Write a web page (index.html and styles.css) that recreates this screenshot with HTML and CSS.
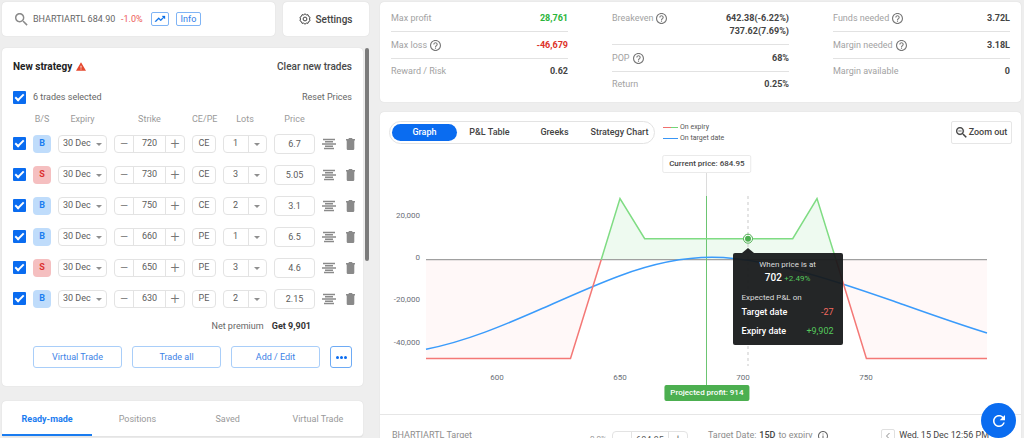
FILE: index.html
```
<!DOCTYPE html>
<html lang="en">
<head>
<meta charset="utf-8">
<meta name="viewport" content="width=device-width, initial-scale=1">
<title>Strategy builder</title>
<link rel="stylesheet" href="styles.css">
</head>
<body>
<svg class="sprite" aria-hidden="true">
  <symbol id="i-search" viewBox="3 3 18 18"><path d="M15.5 14h-.79l-.28-.27C15.41 12.59 16 11.11 16 9.5 16 5.91 13.09 3 9.5 3S3 5.91 3 9.5 5.91 16 9.5 16c1.61 0 3.09-.59 4.23-1.57l.27.28v.79l5 4.99L20.49 19l-4.99-5zm-6 0C7.01 14 5 11.99 5 9.5S7.01 5 9.5 5 14 7.01 14 9.5 11.99 14 9.5 14z"/></symbol>
  <symbol id="i-zoomout" viewBox="3 3 18 18"><path d="M15.5 14h-.79l-.28-.27C15.41 12.59 16 11.11 16 9.5 16 5.91 13.09 3 9.5 3S3 5.91 3 9.5 5.91 16 9.5 16c1.61 0 3.09-.59 4.23-1.57l.27.28v.79l5 4.99L20.49 19l-4.99-5zm-6 0C7.01 14 5 11.99 5 9.5S7.01 5 9.5 5 14 7.01 14 9.5 11.99 14 9.5 14zM7 9h5v1H7z" stroke="currentColor" stroke-width=".3"/></symbol>
  <symbol id="i-trend" viewBox="0 4 24 16"><path d="M16 6l2.29 2.29-4.88 4.88-4-4L2 16.59 3.41 18l6-6 4 4 6.3-6.29L22 12V6z" stroke="currentColor" stroke-width=".6"/></symbol>
  <symbol id="i-gear" viewBox="0 0 24 24"><g fill="none" stroke="currentColor" stroke-width="2" stroke-linejoin="round"><path d="M12 1.5l2.600 2.300 3.400-.4 1.100 3.300 3 1.800L21 12l1.100 3.500-3 1.800-1.100 3.300-3.400-.4L12 22.500l-2.600-2.300-3.400.4-1.100-3.300-3-1.800L3 12 1.900 8.500l3-1.800L6 3.400l3.400.4z"/><circle cx="12" cy="12" r="3.800"/></g></symbol>
  <symbol id="i-warn" viewBox="1 2 22 19"><path d="M1 21h22L12 2 1 21zm12-3h-2v-2h2v2zm0-4h-2v-4h2v4z"/></symbol>
  <symbol id="i-help" viewBox="2 2 20 20"><path d="M11 18h2v-2h-2v2zm1-16C6.480 2 2 6.480 2 12s4.480 10 10 10 10-4.480 10-10S17.520 2 12 2zm0 18c-4.410 0-8-3.590-8-8s3.590-8 8-8 8 3.590 8 8-3.590 8-8 8zm0-14c-2.210 0-4 1.790-4 4h2c0-1.100.9-2 2-2s2 .9 2 2c0 2-3 1.750-3 5h2c0-2.250 3-2.500 3-5 0-2.210-1.790-4-4-4z"/></symbol>
  <symbol id="i-info" viewBox="2 2 20 20"><path d="M11 17h2v-6h-2v6zm1-15C6.480 2 2 6.480 2 12s4.480 10 10 10 10-4.480 10-10S17.520 2 12 2zm0 18c-4.410 0-8-3.590-8-8s3.590-8 8-8 8 3.590 8 8-3.590 8-8 8zM11 9h2V7h-2v2z"/></symbol>
  <symbol id="i-depth" viewBox="0 0 14 12"><path d="M1 1.500h12M3 3.750h8M0 6h14M3 8.250h8M2 10.500h10" fill="none" stroke="currentColor" stroke-width="1.300"/></symbol>
  <symbol id="i-trash" viewBox="0 0 9 12"><path d="M3 0h3l.6 1H9v1.500H0V1h2.400zM.7 2.500h7.600v8.300q0 1.200-1.200 1.200H1.900Q.7 12 .7 10.800z"/></symbol>
  <symbol id="i-refresh" viewBox="4 4 16 16"><path d="M17.650 6.350C16.200 4.900 14.210 4 12 4c-4.420 0-7.990 3.580-7.990 8s3.570 8 7.990 8c3.730 0 6.840-2.550 7.730-6h-2.080c-.82 2.330-3.040 4-5.650 4-3.310 0-6-2.690-6-6s2.690-6 6-6c1.660 0 3.140.69 4.220 1.780L13 11h7V4l-2.350 2.350z"/></symbol>
</svg>

<div class="shell">
  <aside class="side">
    <div class="topbar">
      <div class="card search">
        <svg class="icon search-icon"><use href="#i-search"/></svg>
        <input class="search-input" type="text" value="BHARTIARTL 684.90" aria-label="Search instrument">
        <span class="change">-1.0%</span>
        <button class="chip chip-icon" aria-label="Open chart"><svg class="icon"><use href="#i-trend"/></svg></button>
        <button class="chip">Info</button>
      </div>
      <button class="card settings"><svg class="icon"><use href="#i-gear"/></svg>Settings</button>
    </div>

    <div class="scroller">
      <div class="scroll-content">
        <section class="card strategy">
          <header class="strategy-head">
            <h2>New strategy <svg class="icon warn"><use href="#i-warn"/></svg></h2>
            <button class="link-btn">Clear new trades</button>
          </header>
          <div class="selection">
            <label class="selection-label"><input class="check" type="checkbox" checked>6 trades selected</label>
            <button class="link-btn small">Reset Prices</button>
          </div>
          <table class="trades">
            <colgroup><col class="c-check"><col class="c-side"><col class="c-expiry"><col class="c-strike"><col class="c-type"><col class="c-lots"><col class="c-price"><col class="c-depth"><col class="c-del"></colgroup>
            <thead>
              <tr><th></th><th>B/S</th><th>Expiry</th><th>Strike</th><th>CE/PE</th><th>Lots</th><th>Price</th><th></th><th></th></tr>
            </thead>
            <tbody id="trade-rows"></tbody>
          </table>
          <p class="premium">Net premium <strong>Get 9,901</strong></p>
          <div class="actions">
            <button class="action">Virtual Trade</button>
            <button class="action">Trade all</button>
            <button class="action">Add / Edit</button>
            <button class="more" aria-label="More"><i></i><i></i><i></i></button>
          </div>
        </section>

        <nav class="card tabs">
          <button class="tab active">Ready-made</button>
          <button class="tab">Positions</button>
          <button class="tab">Saved</button>
          <button class="tab">Virtual Trade</button>
        </nav>
      </div>
      <div class="scroll-thumb"></div>
    </div>
  </aside>

  <main class="main">
    <section class="card stats">
      <dl>
        <div><dt>Max profit</dt><dd class="gain">28,761</dd></div>
        <div><dt>Max loss <svg class="icon help"><use href="#i-help"/></svg></dt><dd class="loss">-46,679</dd></div>
        <div><dt>Reward / Risk</dt><dd>0.62</dd></div>
      </dl>
      <dl>
        <div><dt>Breakeven <svg class="icon help"><use href="#i-help"/></svg></dt><dd>642.38(-6.22%)<br>737.62(7.69%)</dd></div>
        <div><dt>POP <svg class="icon help"><use href="#i-help"/></svg></dt><dd>68%</dd></div>
        <div><dt>Return</dt><dd>0.25%</dd></div>
      </dl>
      <dl>
        <div><dt>Funds needed <svg class="icon help"><use href="#i-help"/></svg></dt><dd>3.72L</dd></div>
        <div><dt>Margin needed <svg class="icon help"><use href="#i-help"/></svg></dt><dd>3.18L</dd></div>
        <div><dt>Margin available</dt><dd>0</dd></div>
      </dl>
    </section>

    <section class="card payoff">
      <header class="payoff-head">
        <nav class="pills">
          <button class="pill active">Graph</button>
          <button class="pill">P&amp;L Table</button>
          <button class="pill">Greeks</button>
          <button class="pill">Strategy Chart</button>
        </nav>
        <ul class="legend">
          <li class="legend-expiry">On expiry</li>
          <li class="legend-target">On target date</li>
        </ul>
        <button class="zoom-out"><svg class="icon"><use href="#i-zoomout"/></svg>Zoom out</button>
      </header>

      <div class="chart">
        <svg class="plot" viewBox="380 150 641 264" role="img" aria-label="Profit and loss by price">
          <path class="area-loss" d="M426 259.700V358.500H570.500L601.200 259.700zM836 259.700L866.400 358.500H987V259.700z"/>
          <path class="area-gain" d="M601.200 259.700L620 198.500 644.700 238.700H792.700L817 198.500 836 259.700z"/>
          <path class="axis" d="M426 259.700H987"/>
          <path class="price-stem" d="M706.500 172V196"/>
          <path class="price-line" d="M706.500 196V387"/>
          <path class="cursor" d="M748 196V366"/>
          <path class="line-target" d="M426 349.200C464.900 341.800 503.800 325.400 542.700 308.300 568.500 296.900 594.200 285.200 620 275.700 650.700 264.300 681.300 257.300 712 257.300 739.300 257.300 766.700 262.900 794 269.700 827.300 278.200 860.700 289.600 894 301.300 925 312.300 956 323.500 987 333"/>
          <path class="line-loss" d="M426 358.500H570.500L601.200 259.700M836 259.700L866.400 358.500H987"/>
          <path class="line-gain" d="M601.200 259.700L620 198.500 644.700 238.700H792.700L817 198.500 836 259.700"/>
          <circle class="dot-ring" cx="748" cy="238.700" r="4.500"/>
          <circle class="dot" cx="748" cy="238.700" r="3"/>
          <g class="y-labels"><text x="420" y="218">20,000</text><text x="420" y="260">0</text><text x="420" y="302">-20,000</text><text x="420" y="345">-40,000</text></g>
          <g class="x-labels"><text x="497" y="380">600</text><text x="620" y="380">650</text><text x="743" y="380">700</text><text x="866" y="380">750</text></g>
        </svg>
        <span class="callout current">Current price: 684.95</span>
        <span class="callout projected">Projected profit: 914</span>
        <div class="tip">
          <p class="tip-caption">When price is at</p>
          <p class="tip-price">702 <span>+2.49%</span></p>
          <p class="tip-sub">Expected P&amp;L on</p>
          <p class="tip-row">Target date <span class="neg">-27</span></p>
          <p class="tip-row">Expiry date <span class="pos">+9,902</span></p>
        </div>
      </div>

      <footer class="targets">
        <label class="target-name" for="target-price">BHARTIARTL Target</label>
        <span class="target-pct">0.0%</span>
        <div class="stepper target-stepper"><button aria-label="Decrease target">−</button><input id="target-price" type="text" value="684.95"><button aria-label="Increase target">+</button></div>
        <span class="target-date">Target Date: <b>15D</b> to expiry <svg class="icon info"><use href="#i-info"/></svg></span>
        <button class="prev" aria-label="Previous day"><svg class="icon" viewBox="0 0 6 8"><path d="M4.500 1L1.500 4l3 3" fill="none" stroke="currentColor"/></svg></button>
        <span class="target-time">Wed, 15 Dec 12:56 PM</span>
      </footer>
    </section>
  </main>
  <button class="fab" aria-label="Refresh"><svg class="icon"><use href="#i-refresh"/></svg></button>
</div>
<script src="app.js"></script>
</body>
</html>
```
FILE: styles.css
```
* { box-sizing: border-box; }
body { margin: 0; background: #eee; color: #444; font: 9px/13px Roboto, "Liberation Sans", sans-serif; }
h2, p, dl, dd, ul { margin: 0; padding: 0; }
ul { list-style: none; }
button, input, select { font: inherit; color: inherit; margin: 0; padding: 0; border: 0; background: none; border-radius: 0; outline: 0; }
button { cursor: pointer; }
input[type="text"] { min-width: 0; text-align: center; }
.sprite { position: absolute; width: 0; height: 0; }
.icon { fill: currentColor; flex: none; display: inline-block; }
.card { background: #fff; border-radius: 4px; box-shadow: 0 0 1px rgba(0, 0, 0, .16); }

.shell { display: grid; grid-template-columns: 367px minmax(0, 1fr); gap: 11px; height: 100vh; padding: 2px 3px 0 2px; overflow: hidden; }
.side, .main { min-width: 0; }

.topbar { display: flex; gap: 8px; height: 34px; margin-bottom: 12px; }
.search { flex: 1; display: flex; align-items: center; padding-left: 13px; }
.search-icon { width: 13px; height: 13px; color: #8a8a8a; margin-right: 5px; }
.search-input { width: 86px; height: 14px; color: #666; }
.search-input[type="text"] { text-align: left; }
.change { color: #ec5a56; margin: 0 8px 0 2px; }
.chip { height: 14px; padding: 0 4px; border: 1px solid #7fb4f5; border-radius: 2px; color: #2f80e8; line-height: 12px; margin-right: 7px; }
.chip-icon { width: 18px; padding: 0 2px; display: flex; align-items: center; }
.chip-icon .icon { width: 12px; height: 8px; color: #0a6fe8; }
.settings { width: 86px; display: flex; align-items: center; justify-content: center; gap: 4px; font-size: 10px; font-weight: 500; }
.settings .icon { width: 12px; height: 12px; }

.scroller { display: flex; gap: 2px; align-items: flex-start; }
.scroll-content { flex: 1; min-width: 0; }
.scroll-thumb { width: 4px; height: 213px; border-radius: 2px; background: #7b7b7b; }
.strategy { padding-bottom: 18px; }
.strategy-head { display: flex; justify-content: space-between; align-items: center; height: 36px; padding: 0 11px; }
.strategy-head h2 { display: flex; align-items: center; gap: 4px; font-size: 10px; font-weight: 700; color: #222; }
.warn { width: 10px; height: 9px; color: #e5492f; }
.link-btn { font-size: 10px; font-weight: 500; color: #4a4a4a; }
.link-btn.small { font-size: 9px; font-weight: 400; color: #666; }
.selection { display: flex; justify-content: space-between; align-items: center; height: 26px; padding: 0 11px; }
.selection-label { display: flex; align-items: center; gap: 7px; color: #666; }
.check { appearance: none; display: block; width: 13px; height: 13px; border-radius: 1px; background: #0a6cf0; position: relative; }
.check:checked::after { content: ""; box-sizing: border-box; position: absolute; left: 4px; top: 1px; width: 5px; height: 9px; border: solid #fff; border-width: 0 2px 2px 0; transform: rotate(45deg); }

.trades { table-layout: fixed; width: 100%; border-collapse: collapse; padding: 0; }
.trades th { height: 18px; font-weight: 400; color: #9a9a9a; padding: 0 7px 0 0; text-align: center; white-space: nowrap; }
.trades td { height: 31px; padding: 0 7px 0 0; text-align: center; color: #5c5c5c; }
.trades td:first-child { padding-left: 11px; padding-right: 0; }
.trades td:last-child { padding-right: 8px; }
.c-check { width: 31px; }
.c-side { width: 25px; }
.c-expiry { width: 56px; }
.c-strike { width: 78px; }
.c-type { width: 31px; }
.c-lots { width: 51px; }
.c-price { width: 48px; }
.c-depth { width: 24px; }
.side-tag { display: block; width: 100%; height: 18px; border-radius: 4px; font-weight: 700; background: #bfdcfb; color: #1a7cf0; }
.side-tag.sell { background: #f5bfc0; color: #dc3030; }
.picker { display: block; position: relative; height: 18px; border: 1px solid #e3e3e3; border-radius: 4px; }
.picker::after { content: ""; position: absolute; right: 4px; top: 7px; border: 3px solid transparent; border-top: 3px solid #8f8f8f; border-bottom: 0; }
.picker select { appearance: none; display: block; width: 100%; height: 16px; padding-left: 4px; }
.picker.lots::before { content: ""; position: absolute; right: 17px; top: 0; bottom: 0; width: 1px; background: #e3e3e3; }
.picker.lots::after { right: 6px; }
.picker.lots select { padding-left: 9px; }
.stepper { display: flex; height: 18px; border: 1px solid #e3e3e3; border-radius: 4px; }
.stepper button { width: 18px; flex: none; font-size: 16px; font-weight: 300; line-height: 16px; color: #777; }
.stepper input { flex: 1; width: 100%; border: solid #e3e3e3; border-width: 0 1px; }
.box { display: block; width: 100%; height: 18px; border: 1px solid #e3e3e3; border-radius: 4px; }
.price { height: 20px; }
.icon-btn { display: block; height: 12px; color: #8a8a8a; }
.icon-btn .icon { display: block; height: 12px; }
.icon-btn .depth { width: 14px; }
.icon-btn .trash { width: 9px; }

.premium { padding: 6px 52px 3px 0; text-align: right; color: #666; }
.premium strong { margin-left: 6px; color: #333; }
.actions { display: flex; gap: 10px; padding: 10px 11px 0 31px; }
.action { flex: 1; height: 22px; border: 1px solid #a9cef9; border-radius: 3px; color: #3d82e6; }
.more { width: 22px; border: 1px solid #6eabf5; border-radius: 3px; display: flex; align-items: center; justify-content: center; gap: 1px; }
.more i { width: 3px; height: 3px; border-radius: 50%; background: #0a6cf0; }

.tabs { display: grid; grid-template-columns: repeat(4, 1fr); margin-top: 15px; border-bottom: 1px solid #e4e4e4; }
.tab { height: 35px; padding-top: 3px; color: #999; border-bottom: 2px solid transparent; }
.tab.active { color: #1a7cf0; font-weight: 700; border-color: #1a7cf0; }

.stats { display: grid; grid-template-columns: repeat(3, 1fr); gap: 44px; padding: 3px 11px 11px; }
.stats dl > div { display: flex; justify-content: space-between; align-items: flex-start; padding: 7px 0 6px; border-bottom: 1px solid #e2e2e2; }
.stats dl > div:last-child { border: 0; padding: 6px 0 0; }
.stats dt { display: flex; align-items: center; gap: 3px; height: 13px; color: #a2a2a2; }
.stats dd { text-align: right; font-weight: 700; color: #444; }
.help { width: 11px; height: 11px; color: #777; }
.stats .gain { color: #2bb53c; }
.stats .loss { color: #dc3228; }

.payoff { margin-top: 10px; }
.payoff-head { display: flex; align-items: center; padding: 9px 9px 6px; }
.pills { display: grid; grid-template-columns: repeat(4, 65px); height: 23px; padding: 2px; border: 1px solid #e3e3e3; border-radius: 12px; }
.pill { border-radius: 9px; font-weight: 500; white-space: nowrap; }
.pill.active { background: #0a6cf0; color: #fff; }
.legend { flex: 1; margin-left: 8px; font-size: 7px; line-height: 11px; color: #555; }
.legend li { display: flex; align-items: center; gap: 2px; }
.legend li::before { content: ""; width: 15px; height: 1px; }
.legend-expiry::before { background: linear-gradient(90deg, #f0706e 50%, #72d678 50%); }
.legend-target::before { background: #3a96f5; }
.zoom-out { display: flex; align-items: center; justify-content: center; gap: 2px; width: 61px; height: 23px; border: 1px solid #e6e6e6; border-radius: 2px; font-weight: 500; white-space: nowrap; }
.zoom-out .icon { width: 11px; height: 11px; }

.chart { position: relative; }
.plot { display: block; width: 100%; height: auto; font-size: 8px; }
.area-loss { fill: #fff8f8; }
.area-gain { fill: #eefaf0; }
.plot path[class^="line"], .axis, .price-line, .price-stem, .cursor { fill: none; }
.axis { stroke: #a0a0a0; stroke-width: 1.2; }
.price-stem { stroke: #dcdcdc; }
.price-line { stroke: #6cc572; }
.cursor { stroke: #c9c9c9; stroke-dasharray: 3 3; }
.line-target { stroke: #3a9bfb; stroke-width: 1.5; }
.line-loss { stroke: #f47876; stroke-width: 1.5; }
.line-gain { stroke: #7fdc83; stroke-width: 1.5; }
.dot { fill: #4caf50; }
.dot-ring { fill: #fff; stroke: #4caf50; stroke-width: 1; }
.y-labels { text-anchor: end; fill: #6b6f78; }
.x-labels { text-anchor: middle; fill: #6b6f78; }
.callout { position: absolute; left: 51%; transform: translateX(-50%); font-size: 8px; white-space: nowrap; font-weight: 500; }
.current { top: 2%; padding: 1px 6px; border: 1px solid #eaeaea; border-radius: 2px; background: #fff; line-height: 14px; }
.projected { top: 89%; padding: 1px 6px; border-radius: 2px; background: #4caf50; color: #fff; line-height: 14px; }
.tip { position: absolute; left: 55%; top: 39%; width: 110px; padding: 6px 9px 4px; border-radius: 2px; background: rgba(22, 24, 26, .94); color: #ddd; font-size: 8px; line-height: 12px; }
.tip::before { content: ""; position: absolute; left: 9px; top: -5px; border: 6px solid transparent; border-top: 0; border-bottom: 5px solid #222425; }
.tip-caption, .tip-price { text-align: center; }
.tip-price { font-size: 10px; line-height: 14px; font-weight: 500; color: #fff; }
.tip-price span { font-size: 8px; font-weight: 400; color: #55c95c; }
.tip-sub { margin-top: 6px; line-height: 11px; }
.tip-row { display: flex; justify-content: space-between; font-size: 9px; font-weight: 500; line-height: 19px; color: #fff; }
.tip-row span { font-weight: 400; }
.tip .neg { color: #f2695f; }
.tip .pos { color: #55c95c; }

.targets { display: flex; align-items: flex-start; padding: 14px 12px 8px; border-top: 1px solid #e6e6e6; color: #8d8d8d; white-space: nowrap; }
.target-name { flex: 8; }
.target-pct { margin: 3px 5px 0 0; font-size: 8px; color: #999; }
.target-stepper { width: 76px; margin: 2px 20px 0 0; color: #555; }
.target-date { flex: 7; display: flex; align-items: center; gap: 3px; }
.target-date b { font-weight: 500; color: #444; }
.info { width: 10px; height: 10px; color: #666; margin-left: 2px; }
.prev { width: 14px; height: 14px; border: 1px solid #e0e0e0; border-radius: 2px; display: flex; align-items: center; justify-content: center; }
.prev .icon { width: 6px; height: 8px; }
.target-time { margin: 0 20px 0 4px; color: #444; }
.fab { position: fixed; right: 8px; bottom: 0; width: 35px; height: 35px; border-radius: 50%; background: #0a6cf0; color: #fff; display: flex; align-items: center; justify-content: center; }
.fab .icon { width: 12px; height: 12px; }
```
FILE: app.js
```
const trades = [
  { side: "B", strike: 720, type: "CE", lots: 1, price: "6.7" },
  { side: "S", strike: 730, type: "CE", lots: 3, price: "5.05" },
  { side: "B", strike: 750, type: "CE", lots: 2, price: "3.1" },
  { side: "B", strike: 660, type: "PE", lots: 1, price: "6.5" },
  { side: "S", strike: 650, type: "PE", lots: 3, price: "4.6" },
  { side: "B", strike: 630, type: "PE", lots: 2, price: "2.15" }
];

document.getElementById("trade-rows").innerHTML = trades.map(t => `
  <tr>
    <td><input class="check" type="checkbox" checked aria-label="Include ${t.strike} ${t.type}"></td>
    <td><button class="side-tag${t.side === "S" ? " sell" : ""}">${t.side}</button></td>
    <td><span class="picker"><select aria-label="Expiry"><option>30 Dec</option></select></span></td>
    <td><div class="stepper"><button aria-label="Lower strike">−</button><input type="text" value="${t.strike}" aria-label="Strike"><button aria-label="Raise strike">+</button></div></td>
    <td><button class="box">${t.type}</button></td>
    <td><span class="picker lots"><select aria-label="Lots"><option>${t.lots}</option></select></span></td>
    <td><input class="box price" type="text" value="${t.price}" aria-label="Price"></td>
    <td><button class="icon-btn" aria-label="Market depth"><svg class="icon depth"><use href="#i-depth"/></svg></button></td>
    <td><button class="icon-btn" aria-label="Delete"><svg class="icon trash"><use href="#i-trash"/></svg></button></td>
  </tr>`).join("");
```
